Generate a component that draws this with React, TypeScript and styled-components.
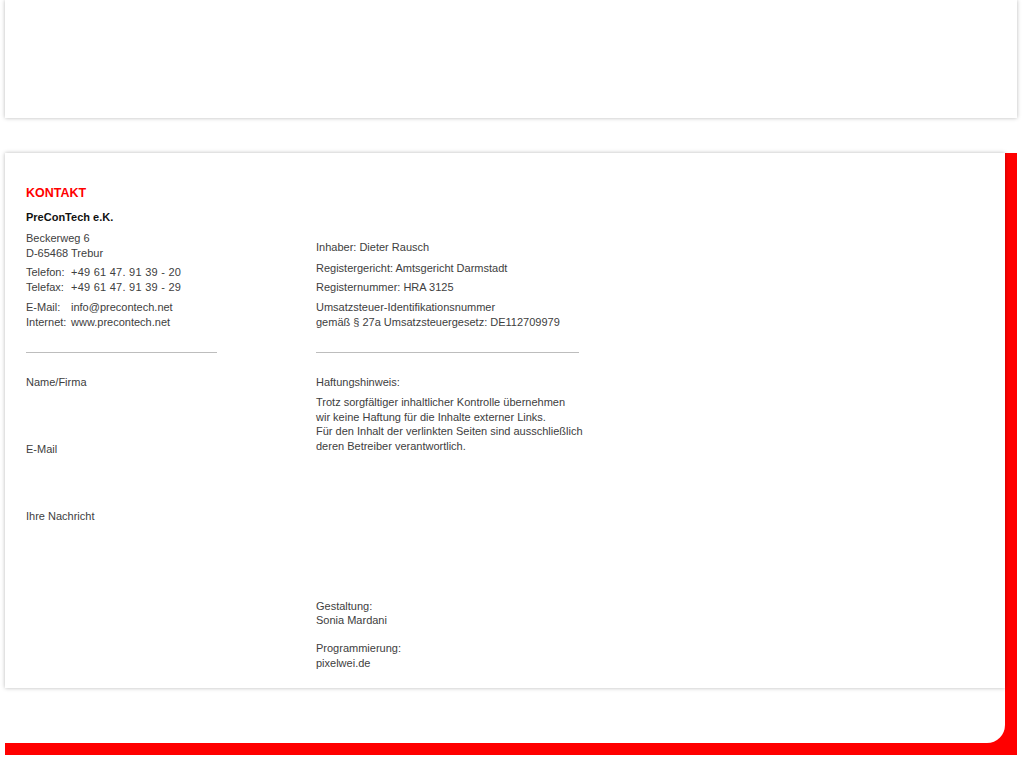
import styled, { createGlobalStyle } from 'styled-components';

const GlobalStyle = createGlobalStyle`
  html, body {
    margin: 0;
    padding: 0;
    background: #fff;
  }
  body {
    font-family: "Liberation Sans", Arial, sans-serif;
    font-size: 11px;
    color: #404040;
  }
`;

const contact = [
  { label: 'Telefon:', value: '+49 61 47. 91 39 - 20' },
  { label: 'Telefax:', value: '+49 61 47. 91 39 - 29' },
];

const web = [
  { label: 'E-Mail:', value: 'info@precontech.net' },
  { label: 'Internet:', value: 'www.precontech.net' },
];

const formFields = ['Name/Firma', 'E-Mail', 'Ihre Nachricht'];

export default function App() {
  return (
    <>
      <GlobalStyle />
      <Page>
        <HeaderBox />
        <Section>
          <Inner>
            <Main>
              <Columns>
                <Block>
                  <Title>KONTAKT</Title>
                  <Company>PreConTech e.K.</Company>
                  <Para $gap={6.5}>
                    Beckerweg 6
                    <br />
                    D-65468 Trebur
                  </Para>
                  <Para $gap={4}>
                    {contact.map((c) => (
                      <LabelRow key={c.label}>
                        <Label>{c.label}</Label>
                        <Phone>{c.value}</Phone>
                      </LabelRow>
                    ))}
                  </Para>
                  <Para $gap={5} $lh={15.5}>
                    {web.map((c) => (
                      <LabelRow key={c.label}>
                        <Label>{c.label}</Label>
                        <span>{c.value}</span>
                      </LabelRow>
                    ))}
                  </Para>
                </Block>

                <Block>
                  <Para $gap={0}>Inhaber: Dieter Rausch</Para>
                  <Para $gap={6}>Registergericht: Amtsgericht Darmstadt</Para>
                  <Para $gap={4}>Registernummer: HRA 3125</Para>
                  <Para $gap={5} $lh={15.5}>
                    Umsatzsteuer-Identifikationsnummer
                    <br />
                    gemäß § 27a Umsatzsteuergesetz: DE112709979
                  </Para>
                </Block>

                <Rule />
                <Rule />

                <Form>
                  {formFields.map((f) => (
                    <Field key={f}>
                      <FieldLabel>{f}</FieldLabel>
                      <FieldInput aria-label={f} />
                    </Field>
                  ))}
                </Form>

                <Block $top>
                  <Para $gap={0}>Haftungshinweis:</Para>
                  <Para $gap={5} $lh={14.5}>
                    Trotz sorgfältiger inhaltlicher Kontrolle übernehmen
                    <br />
                    wir keine Haftung für die Inhalte externer Links.
                    <br />
                    Für den Inhalt der verlinkten Seiten sind ausschließlich
                    <br />
                    deren Betreiber verantwortlich.
                  </Para>
                </Block>

                <span />
                <Credits>
                  Gestaltung:
                  <br />
                  Sonia Mardani
                  <br />
                  <br />
                  Programmierung:
                  <br />
                  pixelwei.de
                </Credits>
              </Columns>
            </Main>
            <Footer />
          </Inner>
        </Section>
      </Page>
    </>
  );
}

const Page = styled.div`
  width: 1022px;
  height: 760px;
  overflow: hidden;
`;

const HeaderBox = styled.div`
  margin-left: 5px;
  width: 1012px;
  height: 118px;
  background: #fff;
  box-shadow: 0 0 4px rgba(0, 0, 0, 0.28);
`;

const Section = styled.div`
  margin: 35px 0 0 5px;
  width: 1000px;
  padding: 0 12px 12px 0;
  background: #ff0000;
`;

const Inner = styled.div`
  background: #fff;
  border-bottom-right-radius: 18px;
`;

const Main = styled.div`
  position: relative;
  height: 535px;
  box-sizing: border-box;
  padding: 33px 0 0 21px;
  background: #fff;
  box-shadow: 0 0 4px rgba(0, 0, 0, 0.28);
`;

const Footer = styled.div`
  height: 55px;
`;

const Columns = styled.div`
  display: grid;
  grid-template-columns: 191px 263px;
  column-gap: 99px;
  align-items: end;
`;

const Block = styled.div<{ $top?: boolean }>`
  display: flex;
  flex-direction: column;
  align-self: ${(p) => (p.$top ? 'start' : 'end')};
  margin-top: ${(p) => (p.$top ? '22.5px' : '0')};
`;

const Title = styled.div`
  font-size: 12.5px;
  line-height: 14px;
  font-weight: bold;
  color: #ff0000;
`;

const Company = styled.div`
  margin-top: 10px;
  font-size: 11px;
  line-height: 14px;
  font-weight: bold;
  color: #111;
`;

const Para = styled.div<{ $gap: number; $lh?: number }>`
  margin-top: ${(p) => p.$gap}px;
  line-height: ${(p) => p.$lh ?? 15}px;
  white-space: nowrap;
`;

const LabelRow = styled.div`
  display: flex;
`;

const Label = styled.span`
  width: 45px;
`;

const Phone = styled.span`
  letter-spacing: 0.25px;
`;

const Rule = styled.div`
  margin-top: 21px;
  height: 1px;
  background: #bdbdbd;
  align-self: start;
`;

const Form = styled.div`
  align-self: start;
  margin-top: 22.5px;
  display: flex;
  flex-direction: column;
`;

const Field = styled.div`
  display: flex;
  flex-direction: column;
`;

const FieldLabel = styled.div`
  line-height: 15px;
`;

const FieldInput = styled.div`
  height: 52px;
`;

const Credits = styled.div`
  margin-top: 22.5px;
  line-height: 14.25px;
  align-self: start;
`;
